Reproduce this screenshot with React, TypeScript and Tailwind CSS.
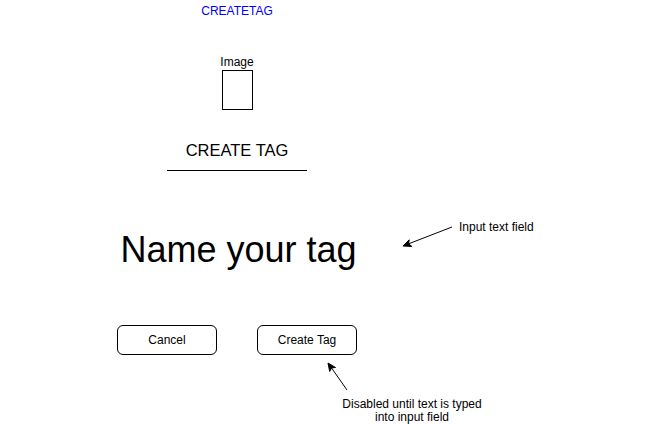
export default function App() {
  const font = { fontFamily: '"Liberation Sans", Arial, sans-serif' };
  return (
    <div className="relative w-[658px] h-[424px] bg-white text-black overflow-hidden" style={font}>
      <div className="flex flex-col items-center w-[240px] ml-[117px] pt-[4px]">
        <div className="text-[12px] leading-[14px] text-[#0000ff]">CREATETAG</div>
        <div className="mt-[37px] text-[12px] leading-[14px]">Image</div>
        <div className="mt-[1px] w-[31px] h-[40px] border border-black" />
        <div className="mt-[31px] text-[16.5px] leading-[19px]">CREATE TAG</div>
        <div className="mt-[10px] w-[140px] h-px bg-black" />
        <div className="mt-[58px] ml-[3px] text-[36px] leading-[41px]">Name your tag</div>
        <div className="mt-[55px] flex gap-[40px]">
          <button className="w-[100px] h-[30px] rounded-[6px] border border-black text-[12px] bg-white">Cancel</button>
          <button className="w-[100px] h-[30px] rounded-[6px] border border-black text-[12px] bg-white">Create Tag</button>
        </div>
      </div>

      <svg className="absolute left-0 top-0 pointer-events-none" width="658" height="424" viewBox="0 0 658 424">
        <line x1="452" y1="227" x2="408.6" y2="243.8" stroke="black" strokeWidth="1" />
        <polygon points="403,246 411.8,246.4 408.6,243.8 409.2,239.8" fill="black" stroke="black" strokeWidth="1" strokeLinejoin="miter" />
        <line x1="347" y1="390" x2="331.5" y2="367.9" stroke="black" strokeWidth="1" />
        <polygon points="328,363 335.5,367.5 331.5,367.9 329.7,371.5" fill="black" stroke="black" strokeWidth="1" />
      </svg>

      <div className="absolute left-[459px] top-[220px] text-[12px] leading-[14px]">Input text field</div>
      <div className="absolute left-[312px] top-[398px] w-[200px] text-center text-[12px] leading-[13px]">
        Disabled until text is typed
        <br />
        into input field
      </div>
    </div>
  );
}
